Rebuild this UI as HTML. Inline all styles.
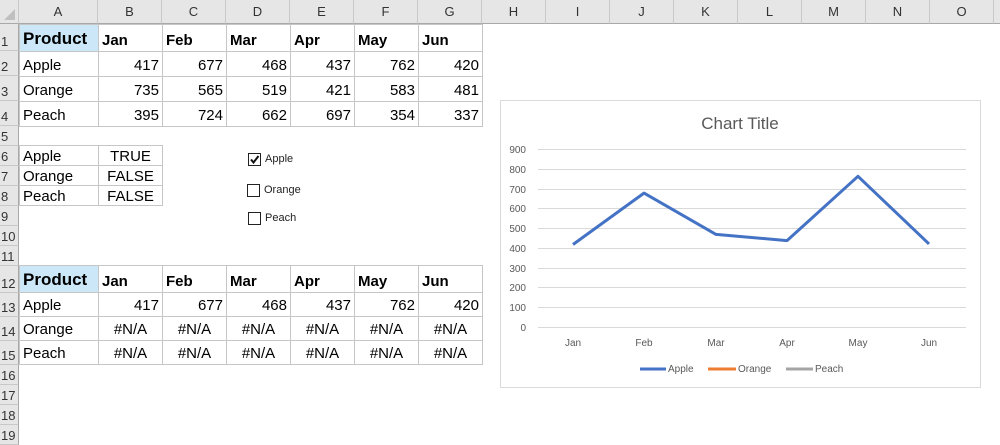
<!DOCTYPE html>
<html><head><meta charset="utf-8"><style>
*{margin:0;padding:0;box-sizing:border-box}
body{width:1000px;height:435px;overflow:hidden;background:#fff;font-family:"Liberation Sans",Arial,sans-serif;position:relative;color:#000}
.a{position:absolute}
.ch{position:absolute;top:0;height:24px;background:#e6e6e6;border-right:1px solid #c8c8c8;border-bottom:1px solid #a8a8a8;font-size:13px;color:#333;text-align:center;line-height:24px}
.rh{position:absolute;left:0;width:19px;background:#e6e6e6;border-right:1px solid #a8a8a8;border-bottom:1px solid #c8c8c8;font-size:13px;color:#333;padding-left:1px;display:flex;align-items:flex-end;padding-bottom:1px}
table{position:absolute;border-collapse:collapse;table-layout:fixed}
td{border:1px solid #c6c6c6;font-size:15px;padding:0 3px;white-space:nowrap;overflow:hidden;vertical-align:bottom;padding-bottom:2px}
td.r{text-align:right}
td.c{text-align:center}
td.b{font-weight:bold;font-size:15px}
td.p{font-weight:bold;font-size:17px;background:#cce8f8}
.cb{position:absolute;width:13px;height:13px;border:1px solid #222;background:#fff}
.cl{position:absolute;font-size:11px;color:#222}
</style></head><body>
<div class="ch" style="left:0;width:19px;background:#e6e6e6"><svg width="19" height="24"><polygon points="15,9 15,20 4,20" fill="#c0c0c0"/></svg></div>
<div class="ch" style="left:19px;width:79px">A</div>
<div class="ch" style="left:98px;width:64px">B</div>
<div class="ch" style="left:162px;width:64px">C</div>
<div class="ch" style="left:226px;width:64px">D</div>
<div class="ch" style="left:290px;width:64px">E</div>
<div class="ch" style="left:354px;width:64px">F</div>
<div class="ch" style="left:418px;width:64px">G</div>
<div class="ch" style="left:482px;width:64px">H</div>
<div class="ch" style="left:546px;width:64px">I</div>
<div class="ch" style="left:610px;width:64px">J</div>
<div class="ch" style="left:674px;width:64px">K</div>
<div class="ch" style="left:738px;width:64px">L</div>
<div class="ch" style="left:802px;width:64px">M</div>
<div class="ch" style="left:866px;width:64px">N</div>
<div class="ch" style="left:930px;width:64px">O</div>
<div class="ch" style="left:994px;width:10px"></div>

<div class="rh" style="top:24px;height:27px">1</div>
<div class="rh" style="top:51px;height:25px">2</div>
<div class="rh" style="top:76px;height:25px">3</div>
<div class="rh" style="top:101px;height:25px">4</div>
<div class="rh" style="top:126px;height:20px">5</div>
<div class="rh" style="top:146px;height:20px">6</div>
<div class="rh" style="top:166px;height:20px">7</div>
<div class="rh" style="top:186px;height:20px">8</div>
<div class="rh" style="top:206px;height:20px">9</div>
<div class="rh" style="top:226px;height:20px">10</div>
<div class="rh" style="top:246px;height:20px">11</div>
<div class="rh" style="top:266px;height:27px">12</div>
<div class="rh" style="top:293px;height:24px">13</div>
<div class="rh" style="top:317px;height:24px">14</div>
<div class="rh" style="top:341px;height:24px">15</div>
<div class="rh" style="top:365px;height:20px">16</div>
<div class="rh" style="top:385px;height:20px">17</div>
<div class="rh" style="top:405px;height:20px">18</div>
<div class="rh" style="top:425px;height:20px">19</div>

<table style="left:19px;top:24px;width:464px">
<colgroup><col style="width:79px"><col style="width:64px"><col style="width:64px"><col style="width:64px"><col style="width:64px"><col style="width:64px"><col style="width:64px"></colgroup>
<tr style="height:27px"><td class="p">Product</td><td class="b">Jan</td><td class="b">Feb</td><td class="b">Mar</td><td class="b">Apr</td><td class="b">May</td><td class="b">Jun</td></tr>
<tr style="height:25px"><td>Apple</td><td class="r">417</td><td class="r">677</td><td class="r">468</td><td class="r">437</td><td class="r">762</td><td class="r">420</td></tr>
<tr style="height:25px"><td>Orange</td><td class="r">735</td><td class="r">565</td><td class="r">519</td><td class="r">421</td><td class="r">583</td><td class="r">481</td></tr>
<tr style="height:25px"><td>Peach</td><td class="r">395</td><td class="r">724</td><td class="r">662</td><td class="r">697</td><td class="r">354</td><td class="r">337</td></tr>
</table>

<table style="left:19px;top:145px;width:144px">
<colgroup><col style="width:79px"><col style="width:64px"></colgroup>
<tr style="height:20px"><td style="padding-bottom:0">Apple</td><td class="c" style="padding-bottom:0">TRUE</td></tr>
<tr style="height:20px"><td style="padding-bottom:0">Orange</td><td class="c" style="padding-bottom:0">FALSE</td></tr>
<tr style="height:20px"><td style="padding-bottom:0">Peach</td><td class="c" style="padding-bottom:0">FALSE</td></tr>
</table>

<table style="left:19px;top:265px;width:464px">
<colgroup><col style="width:79px"><col style="width:64px"><col style="width:64px"><col style="width:64px"><col style="width:64px"><col style="width:64px"><col style="width:64px"></colgroup>
<tr style="height:27px"><td class="p">Product</td><td class="b">Jan</td><td class="b">Feb</td><td class="b">Mar</td><td class="b">Apr</td><td class="b">May</td><td class="b">Jun</td></tr>
<tr style="height:24px"><td>Apple</td><td class="r">417</td><td class="r">677</td><td class="r">468</td><td class="r">437</td><td class="r">762</td><td class="r">420</td></tr>
<tr style="height:24px"><td>Orange</td><td class="c">#N/A</td><td class="c">#N/A</td><td class="c">#N/A</td><td class="c">#N/A</td><td class="c">#N/A</td><td class="c">#N/A</td></tr>
<tr style="height:24px"><td>Peach</td><td class="c">#N/A</td><td class="c">#N/A</td><td class="c">#N/A</td><td class="c">#N/A</td><td class="c">#N/A</td><td class="c">#N/A</td></tr>
</table>

<div class="cb" style="left:248px;top:153px"><svg width="11" height="11" style="position:absolute;left:0;top:0"><path d="M2 5.5 L4.5 8.5 L9.5 2" stroke="#111" stroke-width="2" fill="none"/></svg></div>
<div class="cl" style="left:265px;top:153px">Apple</div>
<div class="cb" style="left:247px;top:184px"></div>
<div class="cl" style="left:264px;top:184px">Orange</div>
<div class="cb" style="left:248px;top:212px"></div>
<div class="cl" style="left:265px;top:212px">Peach</div>

<svg class="a" style="left:0;top:0" width="1000" height="435" font-family="Liberation Sans, sans-serif">
<rect x="500.5" y="100.5" width="480" height="287" fill="#fff" stroke="#d9d9d9"/>
<text x="740" y="129" font-size="17" fill="#595959" text-anchor="middle">Chart Title</text>
<g stroke="#d9d9d9" stroke-width="1">
<line x1="538" x2="966" y1="149.5" y2="149.5"/><line x1="538" x2="966" y1="169.5" y2="169.5"/><line x1="538" x2="966" y1="189.5" y2="189.5"/><line x1="538" x2="966" y1="208.5" y2="208.5"/><line x1="538" x2="966" y1="228.5" y2="228.5"/><line x1="538" x2="966" y1="248.5" y2="248.5"/><line x1="538" x2="966" y1="268.5" y2="268.5"/><line x1="538" x2="966" y1="287.5" y2="287.5"/><line x1="538" x2="966" y1="307.5" y2="307.5"/><line x1="538" x2="966" y1="327.5" y2="327.5"/>
</g>
<g font-size="10" fill="#595959" text-anchor="end">
<text x="526" y="153">900</text><text x="526" y="173">800</text><text x="526" y="193">700</text><text x="526" y="212">600</text><text x="526" y="232">500</text><text x="526" y="252">400</text><text x="526" y="272">300</text><text x="526" y="291">200</text><text x="526" y="311">100</text><text x="526" y="331">0</text>
</g>
<g font-size="10" fill="#595959" text-anchor="middle">
<text x="573" y="346">Jan</text><text x="644" y="346">Feb</text><text x="716" y="346">Mar</text><text x="787" y="346">Apr</text><text x="858" y="346">May</text><text x="929" y="346">Jun</text>
</g>
<polyline points="573,244.5 644,193.1 716,234.4 787,240.6 858,176.3 929,243.9" fill="none" stroke="#4472c4" stroke-width="3" stroke-linejoin="round"/>
<line x1="640" x2="666" y1="369" y2="369" stroke="#4472c4" stroke-width="3"/>
<text x="668" y="372" font-size="10" fill="#595959">Apple</text>
<line x1="708" x2="736" y1="369" y2="369" stroke="#ed7d31" stroke-width="3"/>
<text x="738" y="372" font-size="10" fill="#595959">Orange</text>
<line x1="786" x2="813" y1="369" y2="369" stroke="#a5a5a5" stroke-width="3"/>
<text x="815" y="372" font-size="10" fill="#595959">Peach</text>
</svg>
</body></html>
